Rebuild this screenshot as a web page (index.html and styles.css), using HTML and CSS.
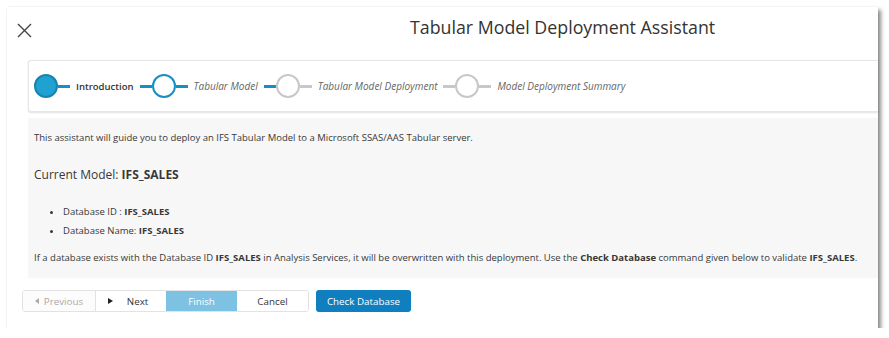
FILE: index.html
```html
<!DOCTYPE html>
<html>
<head>
    <meta charset="UTF-8">
    <title>Tabular Model Deployment Assistant</title>
    <link rel="stylesheet" href="styles.css">
</head>
<body>
    <div class="dialog">
        <div class="header">
            <div class="close">
                <svg width="15" height="15" viewBox="0 0 15 15"><path d="M1 1 L14 14 M14 1 L1 14" stroke="#444" stroke-width="1.4" fill="none"/></svg>
            </div>
            <div class="title">Tabular Model Deployment Assistant</div>
        </div>
        <div class="stepper">
            <div class="step done">
                <span class="dot"></span><span class="bar"></span>
                <span class="label">Introduction</span>
            </div>
            <div class="step active">
                <span class="bar"></span><span class="dot"></span><span class="bar"></span>
                <span class="label">Tabular Model</span>
            </div>
            <div class="step">
                <span class="bar first"></span><span class="dot"></span><span class="bar"></span>
                <span class="label">Tabular Model Deployment</span>
            </div>
            <div class="step">
                <span class="bar"></span><span class="dot"></span><span class="bar"></span>
                <span class="label">Model Deployment Summary</span>
            </div>
        </div>
        <div class="content">
            <p class="intro">This assistant will guide you to deploy an IFS Tabular Model to a Microsoft SSAS/AAS Tabular server.</p>
            <h3 class="model">Current Model: <b>IFS_SALES</b></h3>
            <ul class="info">
                <li>Database ID : <b>IFS_SALES</b></li>
                <li>Database Name: <b>IFS_SALES</b></li>
            </ul>
            <p class="warn">If a database exists with the Database ID <b>IFS_SALES</b> in Analysis Services, it will be overwritten with this deployment. Use the <b>Check Database</b> command given below to validate <b>IFS_SALES</b>.</p>
        </div>
        <div class="actions">
            <div class="btn-group">
                <button class="btn disabled"><span class="tri left"></span>Previous</button>
                <button class="btn"><span class="tri right"></span>Next</button>
                <button class="btn finish">Finish</button>
                <button class="btn">Cancel</button>
            </div>
            <button class="btn primary">Check Database</button>
        </div>
    </div>
</body>
</html>
```

FILE: styles.css
```css
* {
    padding: 0;
    margin: 0;
    box-sizing: border-box;
}
body {
    background: #fff;
    font-family: "Open Sans", "Noto Sans", sans-serif;
    color: #333;
}
.dialog {
    margin: 7px 0 0 7px;
    width: 871px;
    height: 321px;
    background: #fff;
    box-shadow: 3px 3px 4px rgba(0, 0, 0, 0.45), 0 0 2px rgba(0, 0, 0, 0.08);
}
.header {
    height: 53px;
    display: flex;
    align-items: center;
}
.close {
    width: 15px;
    height: 15px;
    margin: 0 0 6px 10px;
    display: flex;
}
.title {
    margin: 0 0 14px 378px;
    font-size: 17.8px;
    line-height: 24px;
    color: #333;
}
.stepper {
    margin-left: 21px;
    height: 52px;
    border: 1px solid #e6e6e6;
    border-right: none;
    border-radius: 3px 0 0 3px;
    box-shadow: 0 1px 2px rgba(0, 0, 0, 0.12);
    display: flex;
    align-items: center;
    padding-left: 5px;
}
.step {
    display: flex;
    align-items: center;
}
.dot {
    width: 24px;
    height: 24px;
    border-radius: 50%;
    border: 2px solid #c8c8c8;
    background: #fff;
}
.bar {
    width: 12px;
    height: 3px;
    background: #c8c8c8;
}
.label {
    font-size: 10px;
    font-style: italic;
    color: #666;
    margin: 0 6px 0 6px;
}
.done .dot {
    background: #1fa2d2;
    border-color: #1683b0;
}
.done .bar, .active .bar, .step .first {
    background: #1690c4;
}
.active .dot {
    border-color: #1690c4;
}
.done .label {
    font-size: 9.5px;
    font-style: normal;
    font-weight: 600;
    color: #333;
}
.content {
    margin: 6px 0 0 21px;
    height: 160px;
    background: #f7f7f7;
    padding: 13px 6px 0 6px;
    font-size: 9.5px;
    line-height: 14px;
    color: #383838;
}
.model {
    font-size: 12px;
    line-height: 18px;
    font-weight: normal;
    margin-top: 21px;
}
.model b {
    font-weight: 700;
}
.info {
    margin: 18px 0 0 29px;
    list-style: disc;
}
.info li {
    line-height: 19px;
}
.warn {
    margin-top: 11px;
}
.actions {
    margin: 12px 0 0 15px;
    display: flex;
    align-items: center;
}
.btn-group {
    display: flex;
    border: 1px solid #e2e2e2;
    border-radius: 3px;
    overflow: hidden;
}
.btn {
    width: 71px;
    height: 20px;
    border: none;
    border-left: 1px solid #e2e2e2;
    background: #fff;
    font-family: "Open Sans", "Noto Sans", sans-serif;
    font-size: 9.8px;
    color: #333;
    display: flex;
    align-items: center;
    justify-content: center;
}
.btn-group .btn:first-child {
    border-left: none;
    width: 72px;
}
.btn.disabled {
    color: #aaa;
    background: #fcfcfc;
}
.btn.finish {
    background: #7dc2e2;
    color: #fff;
    border-left: none;
}
.btn.finish + .btn {
    border-left: none;
}
.tri {
    width: 0;
    height: 0;
    border-top: 3px solid transparent;
    border-bottom: 3px solid transparent;
}
.tri.left {
    border-right: 4px solid #aaa;
    margin-right: 5px;
}
.tri.right {
    border-left: 5px solid #222;
    margin-right: 14px;
    margin-left: -6px;
}
.btn.primary {
    margin-left: 7px;
    width: 95px;
    height: 22px;
    border: none;
    border-radius: 3px;
    background: #0f7fbf;
    color: #fff;
}
```
